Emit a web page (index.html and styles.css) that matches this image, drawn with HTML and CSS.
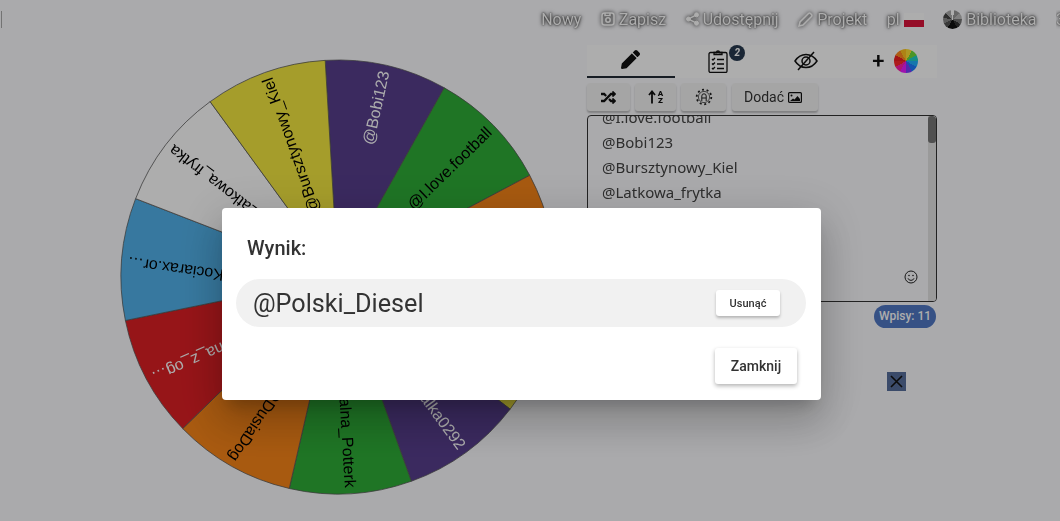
FILE: index.html
```html
<!DOCTYPE html>
<html lang="pl">
<head>
  <meta charset="UTF-8" />
  <meta name="viewport" content="width=device-width, initial-scale=1.0" />
  <title>Koło fortuny</title>
  <link rel="stylesheet" href="styles.css">
</head>
<body>

  <div class="page">

    <!-- Top navigation -->
    <nav class="topnav">
      <span class="corner-mark"></span>
      <a class="nav-item">Nowy</a>
      <a class="nav-item">
        <svg class="nav-icon" width="14" height="14" viewBox="0 0 14 14" fill="none" stroke="#fff" stroke-width="1.5"><rect x="1" y="1" width="12" height="12" rx="2.5"/><circle cx="7" cy="8" r="2.2"/><path d="M4 1v2.5h5V1"/></svg>
        Zapisz
      </a>
      <a class="nav-item">
        <svg class="nav-icon" width="13" height="14" viewBox="0 0 13 14" fill="#fff" stroke="#fff"><circle cx="10.5" cy="2.8" r="2"/><circle cx="2.5" cy="7" r="2"/><circle cx="10.5" cy="11.2" r="2"/><path d="M10.5 2.8 2.5 7l8 4.2" fill="none" stroke-width="1.4"/></svg>
        Udostępnij
      </a>
      <a class="nav-item">
        <svg class="nav-icon" width="15" height="15" viewBox="0 0 15 15" fill="none" stroke="#fff" stroke-width="1.5"><path d="M1 14l1-4 8.500-8.500a1.500 1.500 0 0 1 2 0l1 1a1.500 1.500 0 0 1 0 2L5 13z"/></svg>
        Projekt
      </a>
      <a class="nav-item">pl <span class="flag"></span></a>
      <a class="nav-item"><span class="wheel-grey"></span> Biblioteka</a>
      <a class="nav-item nav-cut">3</a>
    </nav>

    <div class="main">

      <!-- Wheel: every sector is the same wedge, turned by 32.73deg -->
      <svg class="wheel" width="436" height="436" viewBox="-218 -218 436 436">
        <defs>
          <path id="sector" d="M0 0L217 0A217 217 0 0 1 182.6 117.3Z"/>
        </defs>
        <g transform="rotate(-93.4)"><use href="#sector" class="s-purple"/><text class="light" x="211" transform="rotate(16)" dy=".35em">@Bobi123</text></g>
        <g transform="rotate(-60.67)"><use href="#sector" class="s-green"/><text x="211" transform="rotate(16.36)" dy=".35em">@I.love.football</text></g>
        <g transform="rotate(-27.94)"><use href="#sector" class="s-orange"/></g>
        <g transform="rotate(4.79)"><use href="#sector" class="s-yellow"/></g>
        <g transform="rotate(37.52)"><use href="#sector" class="s-purple"/><text class="light" x="211" transform="rotate(16.36)" dy=".35em">@Natalka0292</text></g>
        <g transform="rotate(70.25)"><use href="#sector" class="s-green"/><text x="211" transform="rotate(16.36)" dy=".35em">@Kotalna_Potterk</text></g>
        <g transform="rotate(102.98)"><use href="#sector" class="s-orange"/><text x="211" transform="rotate(16.36) translate(0 2) rotate(4 211 0)" dy=".35em">@DusiaDog</text></g>
        <g transform="rotate(135.71)"><use href="#sector" class="s-red"/><text class="light" x="211" transform="rotate(16.36) translate(0 -3) rotate(4 211 0)" dy=".35em">@Dziewczyna_z_og…</text></g>
        <g transform="rotate(168.44)"><use href="#sector" class="s-blue"/><text x="211" transform="rotate(16.36) translate(0 -3) rotate(3 211 0)" dy=".35em">@Kociarax.or…</text></g>
        <g transform="rotate(201.17)"><use href="#sector" class="s-white"/><text x="211" transform="rotate(16.36)" dy=".35em">@Latkowa_frytka</text></g>
        <g transform="rotate(233.9)"><use href="#sector" class="s-yellow"/><text x="211" transform="rotate(16.36)" dy=".35em">@Bursztynowy_Kiel</text></g>
      </svg>

      <!-- Right panel -->
      <div class="panel">
        <div class="tabs">
          <div class="tab active">
            <svg width="19" height="19" viewBox="0 0 512 512" fill="#111"><path d="M497.900 142.100l-46.100 46.100c-4.700 4.700-12.300 4.700-17 0l-111-111c-4.700-4.700-4.700-12.300 0-17l46.100-46.100c18.700-18.700 49.100-18.700 67.900 0l60.100 60.100c18.800 18.700 18.800 49.100 0 67.900zM284.200 99.800L21.600 362.400.4 483.900c-2.900 16.400 11.400 30.600 27.800 27.800l121.500-21.300 262.600-262.600c4.700-4.700 4.700-12.300 0-17l-111-111c-4.800-4.700-12.400-4.700-17.100 0z"/></svg>
          </div>
          <div class="tab">
            <span class="clip-wrap">
              <svg width="20" height="24" viewBox="0 0 20 24" fill="none" stroke="#111" stroke-width="1.300"><rect x="1" y="3.500" width="18" height="20" rx="1.500"/><path d="M6 5.500V3.500h2.500a1.500 1.500 0 0 1 3 0H14v2z"/><path d="M4 10l1 1 2-2M4 14.500l1 1 2-2M4 19l1 1 2-2M9 10.500h7M9 15h7M9 19.500h7"/></svg>
              <span class="badge">2</span>
            </span>
          </div>
          <div class="tab">
            <svg width="24" height="20" viewBox="0 0 24 20" fill="none" stroke="#111" stroke-width="1.500"><path d="M1 10c3-4.500 7-6.500 11-6.500S20 5.500 23 10c-3 4.500-7 6.500-11 6.500S4 14.500 1 10z"/><circle cx="12" cy="10" r="4"/><path d="M4 19 20 1"/></svg>
          </div>
          <div class="tab tab-add">
            <span class="plus">+</span>
            <span class="wheel-colour"></span>
          </div>
        </div>

        <div class="toolbar">
          <button class="tool tool-shuffle">
            <svg width="15" height="15" viewBox="0 0 512 512" fill="#111"><path d="M504.971 359.029c9.373 9.373 9.373 24.569 0 33.941l-80 79.984c-15.010 15.010-40.971 4.490-40.971-16.971V416h-58.785a12.004 12.004 0 0 1-8.773-3.812l-70.556-75.596 53.333-57.143L352 336h32v-39.981c0-21.438 25.943-31.998 40.971-16.971l80 79.981zM12 176h84l52.781 56.551 53.333-57.143-70.556-75.596A11.999 11.999 0 0 0 122.785 96H12c-6.627 0-12 5.373-12 12v56c0 6.627 5.373 12 12 12zm372 0v39.984c0 21.460 25.961 31.980 40.971 16.971l80-79.984c9.373-9.373 9.373-24.569 0-33.941l-80-79.981C409.943 24.021 384 34.582 384 56.019V96h-58.785a12.004 12.004 0 0 0-8.773 3.812L96 336H12c-6.627 0-12 5.373-12 12v56c0 6.627 5.373 12 12 12h110.785c3.326 0 6.503-1.381 8.773-3.812L352 176h32z"/></svg>
          </button>
          <button class="tool tool-sort">
            <svg width="8" height="14" viewBox="0 0 8 14" fill="none" stroke="#111" stroke-width="1.800"><path d="M4 13.500V2M1 5l3-3.500L7 5"/></svg>
            <span class="az">A<br>Z</span>
          </button>
          <button class="tool tool-gear">
            <svg width="18" height="18" viewBox="0 0 18 18" fill="none" stroke="#222"><circle cx="9" cy="9" r="7.300" stroke-width="1.800" stroke-dasharray="2 2.600"/><circle cx="9" cy="9" r="5.600" stroke-width=".7"/><path d="M6.800 13V8a2.200 2.200 0 0 1 4.400 0v5M6.800 10h4.400" stroke-width="1"/></svg>
          </button>
          <button class="tool tool-add">
            Dodać
            <svg width="14" height="11" viewBox="0 0 14 11" fill="none" stroke="#111" stroke-width="1.200"><rect x=".6" y=".6" width="12.800" height="9.800" rx="1"/><circle cx="3.500" cy="3.500" r="1" fill="#111" stroke="none"/><path d="M2 9l3-2.500 1.500 1L9.500 4 12 7v2z" fill="#111" stroke="none"/></svg>
          </button>
        </div>

        <div class="entries">
          <div class="entry-list">
            <div class="entry">@I.love.football</div>
            <div class="entry">@Bobi123</div>
            <div class="entry">@Bursztynowy_Kiel</div>
            <div class="entry">@Latkowa_frytka</div>
          </div>
          <div class="scrollbar"><span class="thumb"></span></div>
          <svg class="smile" width="14" height="14" viewBox="0 0 14 14" fill="none" stroke="#222" stroke-width="1"><circle cx="7" cy="7" r="6"/><circle cx="5" cy="5.500" r=".8" fill="#222" stroke="none"/><circle cx="9" cy="5.500" r=".8" fill="#222" stroke="none"/><path d="M4 8.300a3.200 3.200 0 0 0 6 0"/></svg>
        </div>

        <span class="count">Wpisy: 11</span>
        <span class="close-box">
          <svg width="13" height="13" viewBox="0 0 13 13" fill="none" stroke="#111" stroke-width="1.600"><path d="M1 1l11 11M12 1 1 12"/></svg>
        </span>
      </div>
    </div>
  </div>

  <!-- Result dialog -->
  <div class="overlay"></div>
  <div class="dialog">
    <h2 class="dialog-title">Wynik:</h2>
    <div class="result">
      <span class="result-name">@Polski_Diesel</span>
      <button class="btn-remove">Usunąć</button>
    </div>
    <div class="dialog-actions">
      <button class="btn-close">Zamknij</button>
    </div>
  </div>

</body>
</html>
```

FILE: styles.css
```css
* {
  box-sizing: border-box;
}
body {
  margin: 0;
  height: 521px;
  overflow: hidden;
  background: #fbfbfe;
  font-family: Roboto, sans-serif;
}
button {
  border: 0;
  font-family: Roboto, sans-serif;
  cursor: pointer;
}
.page {
  height: 521px;
  filter: blur(0.7px);
}

/* top navigation */
.topnav {
  display: flex;
  align-items: center;
  height: 38px;
  gap: 19.500px;
  overflow: hidden;
}
.corner-mark {
  width: 2px;
  height: 17px;
  margin-right: auto;
  border-right: 1px solid #aaa;
}
.nav-item {
  display: flex;
  align-items: center;
  gap: 4px;
  flex: none;
  font-size: 16px;
  color: #fff;
  text-shadow: 0 0 4px #222, 0 0 2px #333;
}
.nav-icon {
  filter: drop-shadow(0 0 2px #222);
}
.nav-cut {
  width: 4px;
  overflow: hidden;
}
.flag {
  width: 20px;
  height: 14px;
  margin-top: 2px;
  background: linear-gradient(#fff 50%, #dc143c 50%);
}
.wheel-grey {
  width: 19px;
  height: 19px;
  margin-top: 1px;
  border-radius: 50%;
  background: conic-gradient(#fff 0 12deg, #999 12deg 50deg, #bbb 50deg 85deg, #777 85deg 120deg, #333 120deg 150deg, #111 150deg 210deg, #555 210deg 245deg, #888 245deg 280deg, #444 280deg 315deg, #aaa 315deg 348deg, #fff 348deg 360deg);
}

/* main area */
.main {
  display: flex;
  align-items: flex-start;
  gap: 31px;
  padding-left: 120px;
}
.wheel {
  flex: none;
  margin-top: 21px;
}
.wheel use {
  stroke: #555;
  stroke-width: 0.7;
}
.wheel text {
  font-family: "Liberation Sans", Arial, sans-serif;
  font-size: 16px;
  text-anchor: end;
  fill: #000;
}
.wheel text.light {
  fill: #fff;
}
.s-purple { fill: #573e8d; }
.s-green { fill: #2ead37; }
.s-orange { fill: #f88518; }
.s-yellow { fill: #f4e840; }
.s-red { fill: #de1f24; }
.s-blue { fill: #52b2ea; }
.s-white { fill: #fff; }

/* right panel */
.panel {
  display: flex;
  flex-direction: column;
  width: 350px;
  margin-top: 7px;
}
.tabs {
  display: flex;
  height: 33px;
  background: #fff;
}
.tab {
  display: flex;
  align-items: center;
  justify-content: center;
  width: 87.500px;
  padding-bottom: 2px;
}
.tab.active {
  border-bottom: 2px solid #222c36;
}
.tab-add {
  gap: 10px;
  padding-left: 4px;
}
.plus {
  font-size: 22px;
  font-weight: 500;
  color: #111;
}
.wheel-colour {
  width: 24px;
  height: 24px;
  border-radius: 50%;
  background: conic-gradient(#ffe135 0 30deg, #6fdc3c 30deg 60deg, #1fd0c8 60deg 90deg, #1fb0ff 90deg 120deg, #1e7bff 120deg 150deg, #7a3cff 150deg 180deg, #e81cff 180deg 210deg, #ff1fa8 210deg 240deg, #ff2a2a 240deg 270deg, #f01f1f 270deg 300deg, #ff8a1f 300deg 330deg, #ffc21f 330deg 360deg);
}
.clip-wrap {
  position: relative;
  display: flex;
}
.badge {
  position: absolute;
  top: -4px;
  left: 21px;
  width: 16px;
  height: 16px;
  border-radius: 50%;
  background: #27394f;
  color: #fff;
  font-size: 10px;
  font-weight: 700;
  font-style: italic;
  text-align: center;
  line-height: 16px;
}

.toolbar {
  display: flex;
  gap: 5px;
  margin-top: 5px;
  height: 28px;
}
.tool {
  display: flex;
  align-items: center;
  justify-content: center;
  gap: 4px;
  padding: 0;
  background: #f4f4f4;
  border-radius: 3px;
  box-shadow: 0 2px 2px rgba(0, 0, 0, 0.25);
  font-size: 14px;
  color: #333;
}
.tool-shuffle { width: 43px; }
.tool-sort { width: 41px; gap: 2px; }
.tool-gear { width: 45px; }
.tool-add { width: 86px; margin-left: 1px; padding-right: 4px; }
.az {
  font-size: 8px;
  font-weight: 900;
  line-height: 7px;
  color: #111;
}

.entries {
  position: relative;
  display: flex;
  height: 187px;
  margin-top: 4px;
  overflow: hidden;
  border: 1px solid #333;
  border-radius: 4px;
}
.entry-list {
  flex: 1;
  margin-top: -11px;
  padding-left: 14px;
  font-family: "Noto Sans", sans-serif;
  font-size: 15px;
  line-height: 25px;
  color: #444;
}
.scrollbar {
  width: 8px;
  background: #e4e4e4;
}
.thumb {
  display: block;
  height: 27px;
  background: #777;
  border-radius: 3px;
}
.smile {
  position: absolute;
  right: 18px;
  bottom: 17px;
}

.count {
  align-self: flex-end;
  width: 62px;
  height: 23px;
  margin: 3px 1px 0 0;
  border-radius: 12px;
  background: #5078c4;
  color: #fff;
  font-size: 12px;
  font-weight: 500;
  text-align: center;
  line-height: 23px;
}
.close-box {
  display: flex;
  align-items: center;
  justify-content: center;
  width: 19px;
  height: 19px;
  margin: 44px 0 0 300px;
  background: #586f9c;
}

/* dialog */
.overlay {
  position: fixed;
  inset: 0;
  background: rgba(0, 0, 0, 0.32);
}
.dialog {
  position: fixed;
  left: 222px;
  top: 208px;
  display: flex;
  flex-direction: column;
  width: 599px;
  height: 192px;
  padding: 28px 15px 0 14px;
  background: #fff;
  border-radius: 4px;
  box-shadow: 0 11px 15px -7px rgba(0, 0, 0, 0.2), 0 24px 38px 3px rgba(0, 0, 0, 0.14), 0 9px 46px 8px rgba(0, 0, 0, 0.12);
}
.dialog-title {
  margin: 0 0 0 11px;
  font-size: 20px;
  font-weight: 500;
  line-height: 24px;
  color: #333;
}
.result {
  display: flex;
  align-items: center;
  justify-content: space-between;
  height: 48px;
  margin-top: 19px;
  padding: 0 26px 0 17px;
  border-radius: 24px;
  background: #f1f1f1;
}
.result-name {
  font-size: 25.200px;
  color: #333;
}
.btn-remove {
  width: 64px;
  height: 26px;
  padding: 0;
  background: #fff;
  border-radius: 3px;
  box-shadow: 0 2px 3px rgba(0, 0, 0, 0.25);
  font-size: 11px;
  font-weight: 500;
  color: #333;
}
.dialog-actions {
  display: flex;
  justify-content: flex-end;
  margin: 21px 9px 0 0;
}
.btn-close {
  width: 82px;
  height: 36px;
  padding: 0;
  background: #fff;
  border-radius: 3px;
  box-shadow: 0 2px 4px rgba(0, 0, 0, 0.3);
  font-size: 14px;
  font-weight: 500;
  color: #333;
}
```
